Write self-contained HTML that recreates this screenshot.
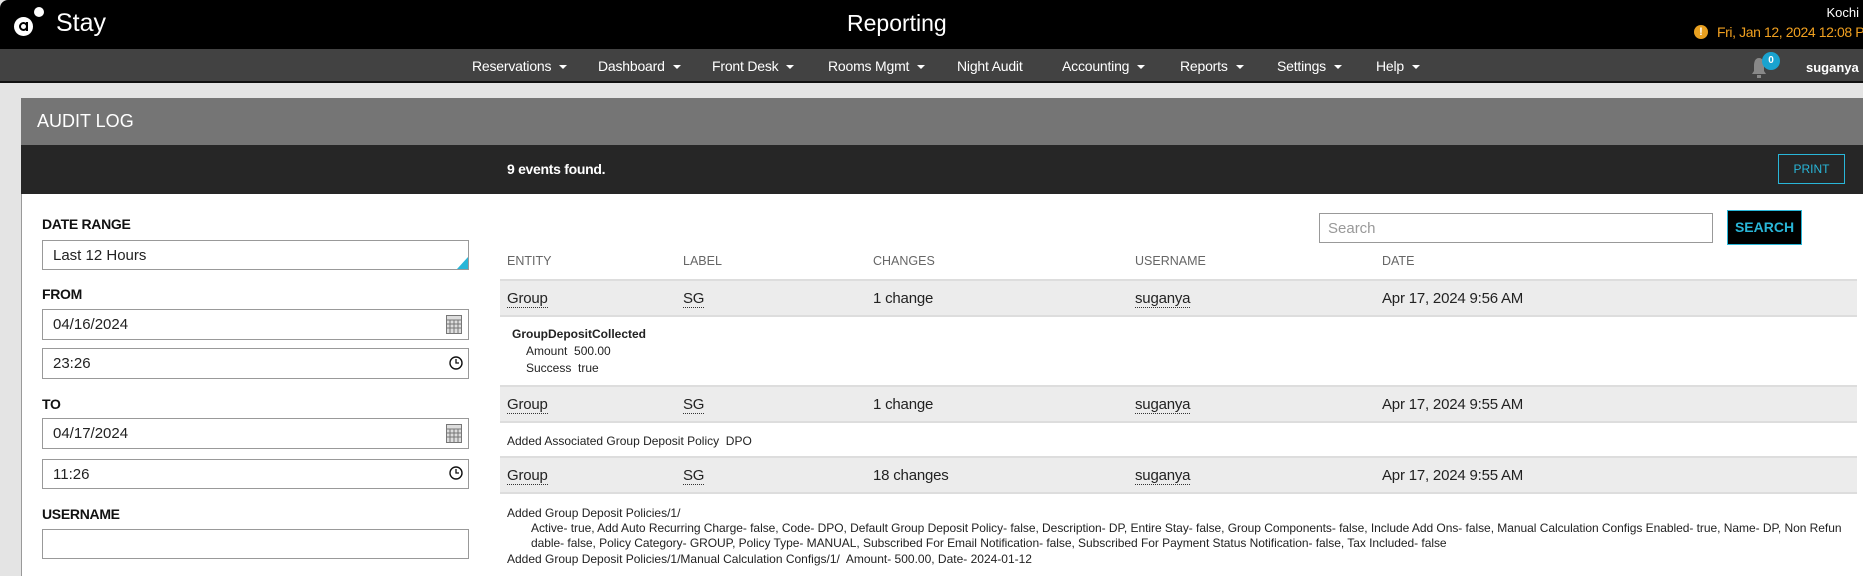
<!DOCTYPE html>
<html><head><meta charset="utf-8"><style>
*{margin:0;padding:0;box-sizing:border-box}
body{width:1863px;height:576px;overflow:hidden;background:#e4e4e4;font-family:"Liberation Sans",sans-serif;position:relative;color:#222}
.a{position:absolute;white-space:nowrap}
.nav{font-size:14px;color:#fff;top:58px;letter-spacing:-0.2px}
.nav .c{display:inline-block;border-left:4px solid transparent;border-right:4px solid transparent;border-top:4px solid #fff;margin-left:8px;vertical-align:middle}
.lbl{font-size:14px;font-weight:bold;color:#111;left:42px;letter-spacing:-0.3px}
.inp{left:42px;width:427px;border:1px solid #999;background:#fff;font-size:15px;padding-left:10px;display:flex;align-items:center}
.th{font-size:12.5px;color:#666;top:254px}
.row{left:500px;width:1357px;height:38px;background:#ececec;border-top:2px solid #ddd;border-bottom:2px solid #ddd}
.cell{font-size:15px;top:9px;position:absolute;white-space:nowrap;letter-spacing:-0.2px}
.u{border-bottom:1px dotted #333}
.d{font-size:12px;color:#222}
</style></head><body>
<div class="a" style="left:0;top:0;width:1863px;height:49px;background:#000;border-top-left-radius:8px"></div>
<div class="a" style="left:14px;top:17px;width:19px;height:19px;border-radius:50%;background:#fff"></div>
<div class="a" style="left:19px;top:22px;width:9px;height:9px;border-radius:50%;border:2px solid #000"></div>
<div class="a" style="left:26px;top:22px;width:2px;height:9px;background:#000"></div>
<div class="a" style="left:34px;top:7px;width:10px;height:10px;border-radius:50%;background:#fff"></div>
<div class="a" style="left:56px;top:9px;font-size:25px;color:#fff">Stay</div>
<div class="a" style="left:847px;top:10px;font-size:23px;color:#fff">Reporting</div>
<div class="a" style="right:4px;top:5px;font-size:13px;color:#fff">Kochi</div>
<div class="a" style="left:1694px;top:25px;width:14px;height:14px;border-radius:50%;background:#e8a020;color:#fff;font-size:11px;font-weight:bold;text-align:center;line-height:14px">!</div>
<div class="a" style="left:1717px;top:24px;font-size:14px;color:#f0a020;letter-spacing:-0.4px">Fri, Jan 12, 2024 12:08 PM</div>
<div class="a" style="left:0;top:49px;width:1863px;height:34px;background:#424242;border-bottom:2px solid #111"></div>
<div class="a nav" style="left:472px">Reservations<span class="c"></span></div>
<div class="a nav" style="left:598px">Dashboard<span class="c"></span></div>
<div class="a nav" style="left:712px">Front Desk<span class="c"></span></div>
<div class="a nav" style="left:828px">Rooms Mgmt<span class="c"></span></div>
<div class="a nav" style="left:957px">Night Audit</div>
<div class="a nav" style="left:1062px">Accounting<span class="c"></span></div>
<div class="a nav" style="left:1180px">Reports<span class="c"></span></div>
<div class="a nav" style="left:1277px">Settings<span class="c"></span></div>
<div class="a nav" style="left:1376px">Help<span class="c"></span></div>
<svg class="a" style="left:1751px;top:56px" width="16" height="23" viewBox="0 0 16 23"><path d="M8 2C4 2 3 6 3 10v5l-2 3h14l-2-3v-5c0-4-1-8-5-8z" fill="#888"/><rect x="6" y="19" width="4" height="3" fill="#888"/></svg>
<div class="a" style="left:1762px;top:52px;width:18px;height:18px;border-radius:50%;background:#1aa3d0;color:#fff;font-size:10px;font-weight:bold;text-align:center;line-height:18px">0</div>
<div class="a" style="left:1806px;top:60px;font-size:13px;font-weight:bold;color:#fff">suganya</div>
<div class="a" style="left:21px;top:98px;width:1842px;height:478px;background:#fff;border-left:1px solid #999"></div>
<div class="a" style="left:21px;top:98px;width:1842px;height:47px;background:#757575"></div>
<div class="a" style="left:37px;top:111px;font-size:18px;color:#fff">AUDIT LOG</div>
<div class="a" style="left:21px;top:145px;width:1842px;height:49px;background:#262626"></div>
<div class="a" style="left:507px;top:161px;font-size:14px;font-weight:bold;color:#fff;letter-spacing:-0.3px">9 events found.</div>
<div class="a" style="left:1778px;top:154px;width:67px;height:30px;border:1px solid #29b6d8;color:#29b6d8;font-size:12px;text-align:center;line-height:28px">PRINT</div>
<div class="a lbl" style="top:216px">DATE RANGE</div>
<div class="a inp" style="top:240px;height:30px">Last 12 Hours</div>
<div class="a" style="left:457px;top:257px;width:0;height:0;border-left:11px solid transparent;border-bottom:12px solid #29b6d8"></div>
<div class="a lbl" style="top:286px">FROM</div>
<div class="a inp" style="top:309px;height:31px">04/16/2024</div>
<div class="a inp" style="top:348px;height:31px">23:26</div>
<div class="a lbl" style="top:396px">TO</div>
<div class="a inp" style="top:418px;height:31px">04/17/2024</div>
<div class="a inp" style="top:459px;height:30px">11:26</div>
<div class="a lbl" style="top:506px">USERNAME</div>
<div class="a inp" style="top:529px;height:30px"></div>
<svg class="a" style="left:446px;top:315px" width="16" height="19"><rect x="0.5" y="0.5" width="15" height="18" fill="#ddd" stroke="#777"/><path d="M0 5h16M0 9h16M0 13h16M4 5v14M8 5v14M12 5v14" stroke="#777"/></svg>
<svg class="a" style="left:446px;top:424px" width="16" height="19"><rect x="0.5" y="0.5" width="15" height="18" fill="#ddd" stroke="#777"/><path d="M0 5h16M0 9h16M0 13h16M4 5v14M8 5v14M12 5v14" stroke="#777"/></svg>
<svg class="a" style="left:449px;top:356px" width="14" height="14"><circle cx="7" cy="7" r="6" fill="none" stroke="#111" stroke-width="1.4"/><path d="M7 3v4h3" fill="none" stroke="#111" stroke-width="1.3"/></svg>
<svg class="a" style="left:449px;top:466px" width="14" height="14"><circle cx="7" cy="7" r="6" fill="none" stroke="#111" stroke-width="1.4"/><path d="M7 3v4h3" fill="none" stroke="#111" stroke-width="1.3"/></svg>
<div class="a" style="left:1319px;top:213px;width:394px;height:30px;border:1px solid #999;font-size:15px;color:#999;padding:6px 8px">Search</div>
<div class="a" style="left:1727px;top:210px;width:75px;height:35px;background:#000;border:1px solid #29b6d8;color:#29b6d8;font-size:14px;font-weight:bold;text-align:center;line-height:33px">SEARCH</div>
<div class="a th" style="left:507px">ENTITY</div>
<div class="a th" style="left:683px">LABEL</div>
<div class="a th" style="left:873px">CHANGES</div>
<div class="a th" style="left:1135px">USERNAME</div>
<div class="a th" style="left:1382px">DATE</div>
<div class="a row" style="top:279px"><span class="cell u" style="left:7px">Group</span><span class="cell u" style="left:183px">SG</span><span class="cell" style="left:373px">1 change</span><span class="cell u" style="left:635px">suganya</span><span class="cell" style="left:882px">Apr 17, 2024 9:56 AM</span></div>
<div class="a d" style="left:512px;top:327px;font-weight:bold">GroupDepositCollected</div>
<div class="a d" style="left:526px;top:344px">Amount&nbsp; 500.00</div>
<div class="a d" style="left:526px;top:361px">Success&nbsp; true</div>
<div class="a row" style="top:385px"><span class="cell u" style="left:7px">Group</span><span class="cell u" style="left:183px">SG</span><span class="cell" style="left:373px">1 change</span><span class="cell u" style="left:635px">suganya</span><span class="cell" style="left:882px">Apr 17, 2024 9:55 AM</span></div>
<div class="a d" style="left:507px;top:434px">Added Associated Group Deposit Policy&nbsp; DPO</div>
<div class="a row" style="top:456px"><span class="cell u" style="left:7px">Group</span><span class="cell u" style="left:183px">SG</span><span class="cell" style="left:373px">18 changes</span><span class="cell u" style="left:635px">suganya</span><span class="cell" style="left:882px">Apr 17, 2024 9:55 AM</span></div>
<div class="a d" style="left:507px;top:506px">Added Group Deposit Policies/1/</div>
<div class="a d" style="left:531px;top:521px;letter-spacing:-0.04px">Active- true, Add Auto Recurring Charge- false, Code- DPO, Default Group Deposit Policy- false, Description- DP, Entire Stay- false, Group Components- false, Include Add Ons- false, Manual Calculation Configs Enabled- true, Name- DP, Non Refun</div>
<div class="a d" style="left:531px;top:536px;letter-spacing:-0.04px">dable- false, Policy Category- GROUP, Policy Type- MANUAL, Subscribed For Email Notification- false, Subscribed For Payment Status Notification- false, Tax Included- false</div>
<div class="a d" style="left:507px;top:552px">Added Group Deposit Policies/1/Manual Calculation Configs/1/&nbsp; Amount- 500.00, Date- 2024-01-12</div>
</body></html>
